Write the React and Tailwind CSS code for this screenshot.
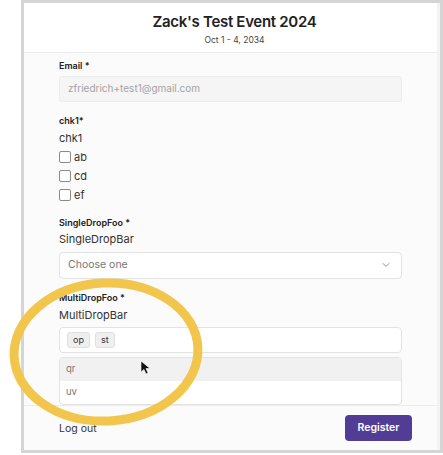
import React from 'react'
import { ChevronDown } from 'lucide-react'

const Label = ({ children }) => (
  <div className="text-[9px] font-semibold text-[#222] leading-[12px]">{children}</div>
)

const Check = ({ label }) => (
  <label className="flex items-end gap-[3px] h-[19px]">
    <span className="w-[12px] h-[12px] rounded-[2px] border border-[#8a8a8a] bg-white mb-[1px]" />
    <span className="text-[11px] text-[#333] leading-[14px]">{label}</span>
  </label>
)

const Chip = ({ children }) => (
  <span className="h-[16px] px-[5px] flex items-center rounded-[3px] bg-[#efefef] border border-[#e0e0e0] text-[9px] text-[#333]">
    {children}
  </span>
)

const App = () => {
  return (
    <div className="relative w-[443px] h-[455px] bg-white overflow-hidden" style={{ fontFamily: 'Inter, "Liberation Sans", sans-serif' }}>
      <div className="ml-[21px] w-[422px] h-[453px] border-[3px] border-[#d5d5d5] bg-[#f3f3f3] flex flex-col">
        <div className="h-[51px] bg-white border-b border-[#ececec] flex flex-col items-center pt-[9px] pl-[8px] mr-[3px]">
          <h1 className="text-[15px] font-semibold text-[#222] leading-[20px] tracking-[-0.02em]">Zack's Test Event 2024</h1>
          <div className="text-[8.5px] text-[#444] mt-[3px] leading-[10px]">Oct 1 - 4, 2034</div>
        </div>

        <div className="flex-1 bg-[#fbfbfb] mr-[3px] pl-[35px] pr-[35px] pt-[7px] flex flex-col">
          <Label>Email *</Label>
          <div className="mt-[4px] h-[26px] rounded-[3px] border border-[#ececec] bg-[#f5f5f5] flex items-center px-[8px] text-[10px] text-[#a3a3a3]">
            zfriedrich+test1@gmail.com
          </div>

          <div className="mt-[13px]"><Label>chk1*</Label></div>
          <div className="mt-[4px] text-[11px] text-[#333] leading-[14px]">chk1</div>
          <div className="flex flex-col">
            <Check label="ab" />
            <Check label="cd" />
            <Check label="ef" />
          </div>

          <div className="mt-[15px]"><Label>SingleDropFoo *</Label></div>
          <div className="mt-[3px] text-[11px] text-[#333] leading-[14px]">SingleDropBar</div>
          <div className="mt-[6px] h-[27px] rounded-[4px] border border-[#e3e3e3] bg-white flex items-center justify-between pl-[8px] pr-[9px] text-[10.5px] text-[#777]">
            <span>Choose one</span>
            <ChevronDown size={12} strokeWidth={1.6} className="text-[#777]" />
          </div>

          <div className="mt-[13px]"><Label>MultiDropFoo *</Label></div>
          <div className="mt-[4px] text-[11px] text-[#333] leading-[14px]">MultiDropBar</div>
          <div className="mt-[5px] h-[26px] rounded-[4px] border border-[#e3e3e3] bg-white flex items-center gap-[5px] px-[7px]">
            <Chip>op</Chip>
            <Chip>st</Chip>
          </div>
          <div className="mt-[4px] rounded-[4px] border border-[#e3e3e3] bg-white flex flex-col overflow-hidden text-[9.5px] text-[#777]">
            <div className="h-[23px] bg-[#f1f1f1] flex items-center px-[6px]">qr</div>
            <div className="h-[23px] flex items-center px-[6px]">uv</div>
          </div>
        </div>

        <div className="h-[47px] bg-[#fbfbfb] border-t border-[#ececec] mr-[3px] flex items-center justify-between pl-[35px] pr-[25px]">
          <span className="text-[10.5px] text-[#333] mt-[2px]">Log out</span>
          <button className="w-[67px] h-[26px] rounded-[4px] bg-[#523d96] text-white text-[10.5px] font-semibold">Register</button>
        </div>
      </div>

      <svg className="absolute left-0 top-0 pointer-events-none" width="443" height="455">
        <ellipse cx="106" cy="352" rx="92" ry="69" fill="none" stroke="#f2c64d" strokeWidth="9" transform="rotate(-3 106 352)" />
        <path d="M141 361 L141 372 L144 369.5 L146 374 L148 373 L146 368.5 L150 368.5 Z" fill="#111" stroke="white" strokeWidth="0.6" />
      </svg>
    </div>
  )
}

export default App
